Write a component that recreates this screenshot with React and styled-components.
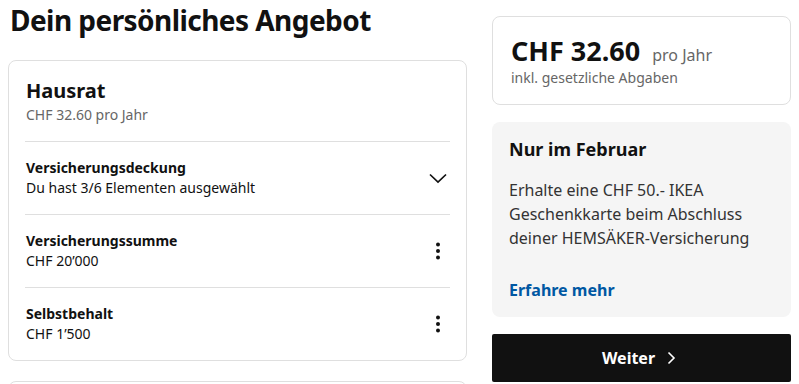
import React from 'react';
import styled, { createGlobalStyle } from 'styled-components';

const Global = createGlobalStyle`
  body {
    margin: 0;
    background: #fff;
    font-family: "Noto Sans", "Open Sans", sans-serif;
    color: #111;
  }
`;

const Page = styled.div`
  display: grid;
  grid-template-columns: 459px 299px;
  column-gap: 25px;
  padding: 0 8px;
  align-items: start;
`;

const Main = styled.div`
  display: flex;
  flex-direction: column;
`;

const Title = styled.h1`
  margin: 0;
  padding: 2px 0 0 2px;
  font-size: 28px;
  line-height: 36px;
  font-weight: 700;
  letter-spacing: -0.55px;
`;

const Card = styled.section`
  border: 1px solid #dfdfdf;
  border-radius: 8px;
  padding: 0 16px;
  margin-top: ${(p) => p.$top || 0}px;
  min-height: ${(p) => p.$minHeight || 0}px;
`;

const CardHead = styled.div`
  padding: 16px 1px;
  border-bottom: 1px solid #dfdfdf;
`;

const CardTitle = styled.h2`
  margin: 0;
  font-size: 20px;
  line-height: 28px;
  font-weight: 700;
`;

const Muted = styled.div`
  font-size: ${(p) => p.$size || 14}px;
  line-height: 20px;
  color: #666;
`;

const Row = styled.div`
  display: flex;
  align-items: center;
  justify-content: space-between;
  padding: 16px 0 16px 1px;
  border-bottom: ${(p) => (p.$last ? 'none' : '1px solid #dfdfdf')};
`;

const RowLabel = styled.div`
  font-size: 14px;
  line-height: 20px;
  font-weight: 700;
`;

const RowValue = styled.div`
  font-size: 14px;
  line-height: 20px;
`;

const IconBtn = styled.span`
  display: flex;
  width: 24px;
  height: 24px;
  align-items: center;
  justify-content: center;
`;

const Side = styled.aside`
  display: flex;
  flex-direction: column;
  gap: 17px;
  padding-top: 16px;
`;

const PriceCard = styled.div`
  border: 1px solid #dfdfdf;
  border-radius: 8px;
  padding: 17px 18px 16px 18px;
`;

const PriceLine = styled.div`
  display: flex;
  align-items: baseline;
  gap: 12px;
`;

const Price = styled.span`
  font-size: 27px;
  line-height: 34px;
  font-weight: 700;
`;

const Promo = styled.div`
  background: #f5f5f5;
  border-radius: 8px;
  padding: 14px 16px 15px 17px;
`;

const PromoTitle = styled.h3`
  margin: 0 0 16px;
  font-size: 18px;
  line-height: 26px;
  font-weight: 700;
`;

const PromoText = styled.p`
  margin: 0 0 28px;
  font-size: 16px;
  line-height: 24px;
  color: #333;
`;

const PromoLink = styled.a`
  display: block;
  font-size: 16px;
  line-height: 24px;
  font-weight: 700;
  color: #0058a3;
  text-decoration: none;
`;

const Button = styled.button`
  display: flex;
  align-items: center;
  justify-content: center;
  gap: 11px;
  height: 48px;
  padding: 0 5px 0 0;
  border: none;
  border-radius: 2px;
  background: #111;
  color: #fff;
  font-family: inherit;
  font-size: 16px;
  font-weight: 700;
`;

const Chevron = () => (
  <svg width="24" height="24" viewBox="0 0 24 24" fill="none" stroke="#111" strokeWidth="1.7">
    <path d="M4 8.5l8 7.5 8-7.5" />
  </svg>
);

const Dots = () => (
  <svg width="6" height="18" viewBox="0 0 6 18" fill="#111">
    <circle cx="3" cy="2.5" r="2" />
    <circle cx="3" cy="9" r="2" />
    <circle cx="3" cy="15.5" r="2" />
  </svg>
);

const ArrowRight = () => (
  <svg width="10" height="14" viewBox="0 0 10 14" fill="none" stroke="#fff" strokeWidth="1.6">
    <path d="M2.5 1.5L8 7l-5.5 5.5" />
  </svg>
);

const rows = [
  { label: 'Versicherungsdeckung', value: 'Du hast 3/6 Elementen ausgewählt', icon: 'chevron' },
  { label: 'Versicherungssumme', value: 'CHF 20’000', icon: 'dots' },
  { label: 'Selbstbehalt', value: 'CHF 1’500', icon: 'dots' },
];

export default function App() {
  return (
    <>
      <Global />
      <Page>
        <Main>
          <Title>Dein persönliches Angebot</Title>
          <Card $top={22}>
            <CardHead>
              <CardTitle>Hausrat</CardTitle>
              <Muted>CHF 32.60 pro Jahr</Muted>
            </CardHead>
            {rows.map((r, i) => (
              <Row key={r.label} $last={i === rows.length - 1}>
                <div>
                  <RowLabel>{r.label}</RowLabel>
                  <RowValue>{r.value}</RowValue>
                </div>
                <IconBtn>{r.icon === 'chevron' ? <Chevron /> : <Dots />}</IconBtn>
              </Row>
            ))}
          </Card>
          <Card $top={20} $minHeight={60} />
        </Main>
        <Side>
          <PriceCard>
            <PriceLine>
              <Price>CHF 32.60</Price>
              <Muted $size={16}>pro Jahr</Muted>
            </PriceLine>
            <Muted>inkl. gesetzliche Abgaben</Muted>
          </PriceCard>
          <Promo>
            <PromoTitle>Nur im Februar</PromoTitle>
            <PromoText>
              Erhalte eine CHF 50.- IKEA Geschenkkarte beim Abschluss deiner HEMSÄKER-Versicherung
            </PromoText>
            <PromoLink href="#">Erfahre mehr</PromoLink>
          </Promo>
          <Button>
            Weiter <ArrowRight />
          </Button>
        </Side>
      </Page>
    </>
  );
}
